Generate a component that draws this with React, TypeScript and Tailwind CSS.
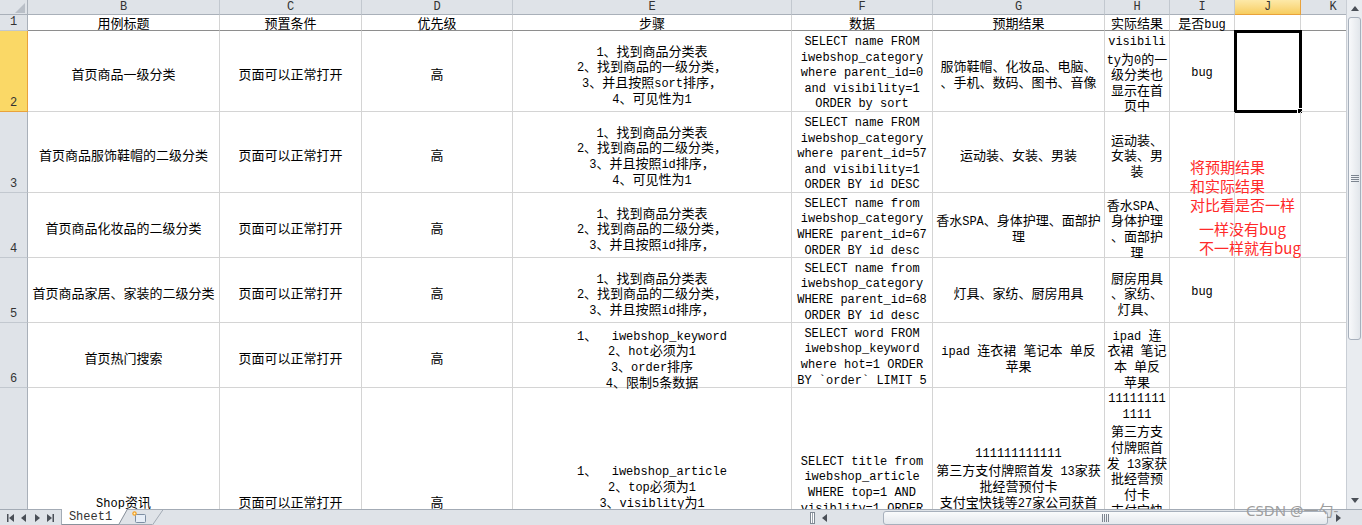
import React from "react"

type SheetRow = {
  num: string
  height: string
  pad: string
  cells: string[][]
}

const CJK_RUN = /([\u3000-\u303f\u4e00-\u9fff\uff00-\uffef]+)/

const colWidths = [
  "w-[192px]",
  "w-[142px]",
  "w-[151px]",
  "w-[279px]",
  "w-[141px]",
  "w-[172px]",
  "w-[65px]",
  "w-[65px]",
  "w-[66px]",
  "w-[65px]",
]

const colNames = ["B", "C", "D", "E", "F", "G", "H", "I", "J", "K"]

const rows: SheetRow[] = [
  {
    num: "1",
    height: "h-[16px]",
    pad: "pt-[1px]",
    cells: [["用例标题"], ["预置条件"], ["优先级"], ["步骤"], ["数据"], ["预期结果"], ["实际结果"], ["是否bug"], [], []],
  },
  {
    num: "2",
    height: "h-[81px]",
    pad: "pt-[6px]",
    cells: [
      ["首页商品一级分类"],
      ["页面可以正常打开"],
      ["高"],
      ["1、找到商品分类表", "2、找到商品的一级分类，", "3、并且按照sort排序，", "4、可见性为1"],
      ["SELECT name FROM", "iwebshop_category", "where parent_id=0", "and visibility=1", "ORDER by sort"],
      ["服饰鞋帽、化妆品、电脑、", "、手机、数码、图书、音像"],
      ["visibili", "ty为0的一", "级分类也", "显示在首", "页中"],
      ["bug"],
      [],
      [],
    ],
  },
  {
    num: "3",
    height: "h-[81px]",
    pad: "pt-[6px]",
    cells: [
      ["首页商品服饰鞋帽的二级分类"],
      ["页面可以正常打开"],
      ["高"],
      ["1、找到商品分类表", "2、找到商品的二级分类，", "3、并且按照id排序，", "4、可见性为1"],
      ["SELECT name FROM", "iwebshop_category", "where parent_id=57", "and visibility=1", "ORDER BY id DESC"],
      ["运动装、女装、男装"],
      ["运动装、", "女装、男", "装"],
      [],
      [],
      [],
    ],
  },
  {
    num: "4",
    height: "h-[65px]",
    pad: "pt-[6px]",
    cells: [
      ["首页商品化妆品的二级分类"],
      ["页面可以正常打开"],
      ["高"],
      ["1、找到商品分类表", "2、找到商品的二级分类，", "3、并且按照id排序，"],
      ["SELECT name from", "iwebshop_category", "WHERE parent_id=67", "ORDER BY id desc"],
      ["香水SPA、身体护理、面部护", "理"],
      ["香水SPA、", "身体护理", "、面部护", "理"],
      [],
      [],
      [],
    ],
  },
  {
    num: "5",
    height: "h-[65px]",
    pad: "pt-[6px]",
    cells: [
      ["首页商品家居、家装的二级分类"],
      ["页面可以正常打开"],
      ["高"],
      ["1、找到商品分类表", "2、找到商品的二级分类，", "3、并且按照id排序，"],
      ["SELECT name from", "iwebshop_category", "WHERE parent_id=68", "ORDER BY id desc"],
      ["灯具、家纺、厨房用具"],
      ["厨房用具", "、家纺、", "灯具、"],
      ["bug"],
      [],
      [],
    ],
  },
  {
    num: "6",
    height: "h-[65px]",
    pad: "pt-[6px]",
    cells: [
      ["首页热门搜索"],
      ["页面可以正常打开"],
      ["高"],
      ["1、  iwebshop_keyword", "2、hot必须为1", "3、order排序", "4、限制5条数据"],
      ["SELECT word FROM", "iwebshop_keyword", "where hot=1 ORDER", "BY `order` LIMIT 5"],
      ["ipad 连衣裙 笔记本 单反", "苹果"],
      ["ipad 连", "衣裙 笔记", "本 单反", "苹果"],
      [],
      [],
      [],
    ],
  },
  {
    num: "7",
    height: "h-[228px]",
    pad: "pt-0",
    cells: [
      ["Shop资讯"],
      ["页面可以正常打开"],
      ["高"],
      ["1、  iwebshop_article", "2、top必须为1", "3、visiblity为1", "4、order排序", "5、限制10条数据"],
      ["SELECT title from", "iwebshop_article", "WHERE top=1 AND", "visiblity=1 ORDER", "BY id desc LIMIT", "10"],
      ["111111111111", "第三方支付牌照首发 13家获", "批经营预付卡", "支付宝快钱等27家公司获首", "批支付牌照", "", ""],
      ["11111111", "1111", "第三方支", "付牌照首", "发 13家获", "批经营预", "付卡", "支付宝快", "钱等27家", "公司获首", "批支付牌", "照", "", ""],
      [],
      [],
      [],
    ],
  },
]

function Line({ text }: { text: string }) {
  const parts = text.split(CJK_RUN)
  return (
    <div className="h-[15.67px] leading-[15.67px] whitespace-pre">
      {text === ""
        ? "\u00a0"
        : parts.map((p, i) =>
            i % 2 === 1 ? (
              <span key={i} className="text-[13px] font-['Noto_Sans_CJK_SC',sans-serif]">
                {p}
              </span>
            ) : (
              p
            )
          )}
    </div>
  )
}

function Selection() {
  return (
    <div className="absolute -left-[1px] -top-[1px] w-[68px] h-[83px] border-[3px] border-black">
      <div className="absolute -right-[4px] -bottom-[4px] w-[6px] h-[6px] bg-black border border-white" />
    </div>
  )
}

function HeaderRow() {
  return (
    <div className="flex h-[15px] shrink-0 bg-[#dfe3e8] text-[12px] text-[#333]">
      <div className="w-[28px] shrink-0 border-r border-b border-[#a9b0b9] flex items-end justify-end pr-[2px] pb-[1px]">
        <svg width="10" height="10" viewBox="0 0 10 10">
          <polygon points="10,0 10,10 0,10" fill="#b9bfc7" />
        </svg>
      </div>
      {colNames.map((c, i) =>
        c === "J" ? (
          <div
            key={c}
            className={`${colWidths[i]} shrink-0 border-r border-b border-[#e9a23b] bg-linear-to-b from-[#fde9a8] to-[#f7cd5e] flex items-center justify-center leading-none`}
          >
            {c}
          </div>
        ) : (
          <div
            key={c}
            className={`${colWidths[i]} shrink-0 border-r border-b border-[#c2c8cf] border-b-[#a9b0b9] flex items-center justify-center leading-none`}
          >
            {c}
          </div>
        )
      )}
    </div>
  )
}

function RowView({ row }: { row: SheetRow }) {
  const first = row.num === "1"
  const active = row.num === "2"
  return (
    <div className={`flex shrink-0 ${row.height}`}>
      <div
        className={
          active
            ? "w-[28px] shrink-0 bg-[#fad866] border-r border-b border-[#e9a23b] flex items-end justify-center pb-[1px] text-[12px] leading-[14px] text-[#333]"
            : "w-[28px] shrink-0 bg-[#dfe3e8] border-r border-b border-[#c2c8cf] border-r-[#a9b0b9] flex items-end justify-center pb-[1px] text-[12px] leading-[14px] text-[#333]"
        }
      >
        {row.num}
      </div>
      {row.cells.map((lines, i) => (
        <div
          key={i}
          className={
            first
              ? `${colWidths[i]} shrink-0 ${row.pad} border-r border-b border-[#d4d4d4] border-b-[#8e8e8e] flex flex-col items-center justify-center text-center`
              : `${colWidths[i]} shrink-0 ${row.pad} relative border-r border-b border-[#d4d4d4] flex flex-col items-center justify-center text-center`
          }
        >
          {lines.map((l, j) => (
            <Line key={j} text={l} />
          ))}
          {active && colNames[i] === "J" && <Selection />}
        </div>
      ))}
    </div>
  )
}

function VScroll() {
  return (
    <div className="w-[16px] h-full shrink-0 bg-[#e9ecf0] border-l border-[#c9ced5] flex flex-col">
      <div className="h-[16px] flex items-center justify-center">
        <svg width="8" height="5" viewBox="0 0 8 5">
          <polygon points="4,0 8,5 0,5" fill="#4a4f57" />
        </svg>
      </div>
      <div className="mx-[1px] mt-[1px] h-[323px] rounded-[3px] border border-[#a7b0bc] bg-linear-to-r from-[#f8f9fb] to-[#e2e6eb] flex items-center justify-center">
        <svg width="8" height="7" viewBox="0 0 8 7">
          <rect x="0" y="0" width="8" height="1" fill="#7d8590" />
          <rect x="0" y="2" width="8" height="1" fill="#7d8590" />
          <rect x="0" y="4" width="8" height="1" fill="#7d8590" />
          <rect x="0" y="6" width="8" height="1" fill="#7d8590" />
        </svg>
      </div>
      <div className="flex-1" />
      <div className="h-[17px] flex items-center justify-center">
        <svg width="8" height="5" viewBox="0 0 8 5">
          <polygon points="0,0 8,0 4,5" fill="#4a4f57" />
        </svg>
      </div>
    </div>
  )
}

function NavIcon({ kind }: { kind: "first" | "prev" | "next" | "last" }) {
  return (
    <svg width="8" height="8" viewBox="0 0 8 8">
      {kind === "first" && (
        <>
          <rect x="0" y="0" width="1.5" height="8" fill="#4a4f57" />
          <polygon points="7,0 7,8 2,4" fill="#4a4f57" />
        </>
      )}
      {kind === "prev" && <polygon points="6,0 6,8 1,4" fill="#4a4f57" />}
      {kind === "next" && <polygon points="2,0 2,8 7,4" fill="#4a4f57" />}
      {kind === "last" && (
        <>
          <polygon points="1,0 1,8 6,4" fill="#4a4f57" />
          <rect x="6.5" y="0" width="1.5" height="8" fill="#4a4f57" />
        </>
      )}
    </svg>
  )
}

function BottomBar() {
  return (
    <div className="flex h-[16px] bg-[#dfe3e8]">
      <div className="w-[62px] shrink-0 border-t border-r border-[#a3abb5] flex items-center justify-around px-[4px]">
        <NavIcon kind="first" />
        <NavIcon kind="prev" />
        <NavIcon kind="next" />
        <NavIcon kind="last" />
      </div>
      <div className="w-[55px] shrink-0 bg-white border-b border-[#8a929c] flex items-center justify-center text-[12px] leading-none text-[#333] pl-[2px]">
        Sheet1
      </div>
      <svg width="48" height="16" viewBox="0 0 48 16" className="shrink-0">
        <polygon points="0,0 10,0 1,16 0,16" fill="#ffffff" />
        <line x1="10" y1="0.5" x2="48" y2="0.5" stroke="#a3abb5" />
        <line x1="10.5" y1="0" x2="1.5" y2="16" stroke="#8a929c" />
        <line x1="0" y1="15.5" x2="2" y2="15.5" stroke="#8a929c" />
        <line x1="2" y1="15.5" x2="35" y2="15.5" stroke="#a3abb5" />
        <line x1="46.5" y1="0" x2="35.5" y2="16" stroke="#a3abb5" />
        <rect x="18.5" y="5.5" width="10" height="8" rx="1" fill="#e7eef7" stroke="#7d8ea3" />
        <circle cx="17.5" cy="4.5" r="2.2" fill="#f4a024" />
        <circle cx="17.5" cy="4.5" r="1" fill="#fff3c4" />
      </svg>
      <div className="flex-1 border-t border-[#a3abb5]" />
      <div className="w-[554px] shrink-0 flex border-t border-[#a3abb5]">
        <div className="w-[8px] flex items-center justify-center">
          <div className="w-[5px] h-[12px] border border-[#7f8893] bg-white flex justify-center">
            <div className="w-px h-full bg-[#9aa3ad]" />
          </div>
        </div>
        <div className="w-[16px] flex items-center justify-center">
          <svg width="5" height="8" viewBox="0 0 5 8">
            <polygon points="5,0 5,8 0,4" fill="#4a4f57" />
          </svg>
        </div>
        <div className="w-[498px] flex items-center">
          <div className="ml-[51px] w-[445px] h-[14px] rounded-[3px] border border-[#a7b0bc] bg-linear-to-b from-[#fafbfc] to-[#e4e8ed] flex items-center justify-center">
            <svg width="7" height="8" viewBox="0 0 7 8">
              <rect x="0" y="0" width="1" height="8" fill="#7d8590" />
              <rect x="2" y="0" width="1" height="8" fill="#7d8590" />
              <rect x="4" y="0" width="1" height="8" fill="#7d8590" />
              <rect x="6" y="0" width="1" height="8" fill="#7d8590" />
            </svg>
          </div>
        </div>
        <div className="w-[16px] flex items-center justify-center">
          <svg width="5" height="8" viewBox="0 0 5 8">
            <polygon points="0,0 0,8 5,4" fill="#4a4f57" />
          </svg>
        </div>
        <div className="w-[16px] bg-[#dfe3e8]" />
      </div>
    </div>
  )
}

export default function App() {
  return (
    <div className="relative w-[1362px] h-[525px] overflow-hidden bg-white text-black text-[12px] font-['Liberation_Mono','Noto_Sans_CJK_SC',monospace]">
      <div className="flex h-[509px]">
        <div className="w-[1346px] h-full overflow-hidden flex flex-col">
          <HeaderRow />
          {rows.map((r) => (
            <RowView key={r.num} row={r} />
          ))}
        </div>
        <VScroll />
      </div>
      <BottomBar />

      {/* red note typed over the sheet */}
      <div className="absolute left-[1190px] top-[157px] text-[15px] leading-[19px] text-[#ff2a2a] font-['Noto_Sans_CJK_SC',sans-serif]">
        <div>将预期结果</div>
        <div>和实际结果</div>
        <div>对比看是否一样</div>
        <div className="ml-[9px] mt-[5px]">一样没有bug</div>
        <div className="ml-[9px]">不一样就有bug</div>
      </div>

      <div className="absolute left-[1246px] top-[503px] text-[15px] leading-[15px] text-[#9d9d9d] font-['Noto_Sans','Noto_Sans_CJK_SC',sans-serif]">
        CSDN @一勺-
      </div>
    </div>
  )
}
